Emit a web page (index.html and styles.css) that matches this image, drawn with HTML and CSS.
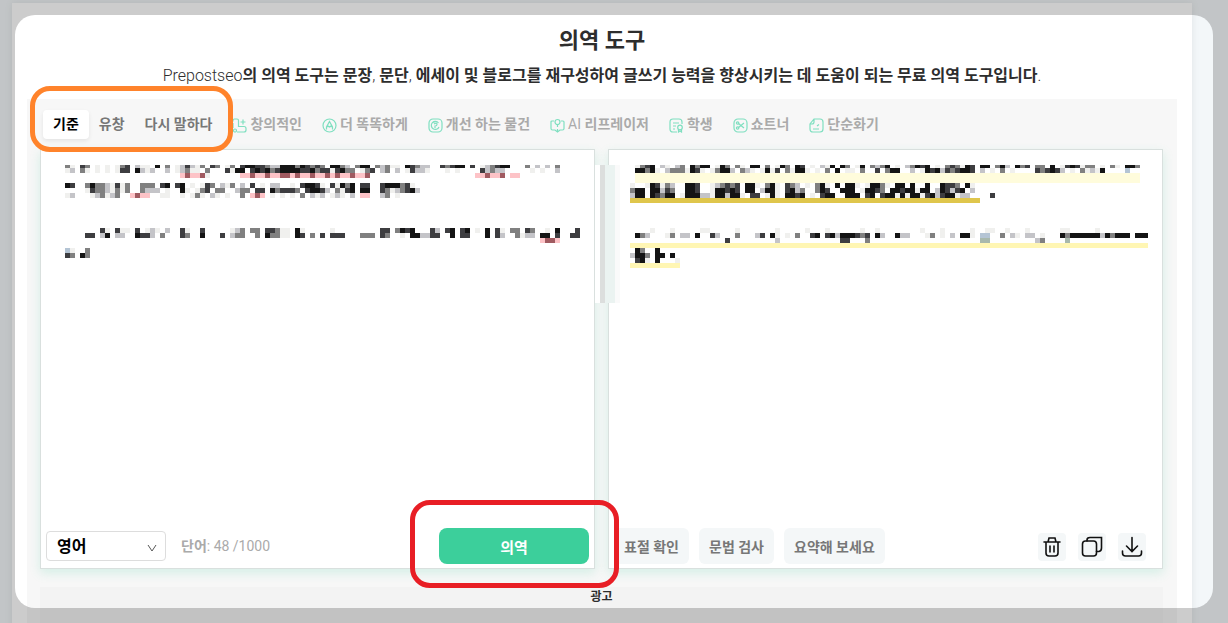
FILE: index.html
```html
<!DOCTYPE html>
<html lang="ko">

<head>
    <meta charset="UTF-8">
    <meta name="viewport" content="width=device-width, initial-scale=1.0">
    <title>의역 도구</title>
    <link rel="stylesheet" href="styles.css">
</head>

<body>
    <main class="page">
        <h1 class="title">의역 도구</h1>
        <p class="subtitle"><span class="light">Prepostseo</span>의 의역 도구는 문장<span class="light">,</span> 문단<span class="light">,</span> 에세이 및 블로그를 재구성하여 글쓰기 능력을 향상시키는 데 도움이 되는 무료 의역 도구입니다<span class="light">.</span></p>

        <section class="tool">
            <nav class="tabs">
                <button class="tab active">기준</button>
                <button class="tab">유창</button>
                <button class="tab">다시 말하다</button>
                <button class="tab premium">
                    <svg viewBox="0 0 15 15"><path d="M1 3.5V2.5Q1 1 2.5 1H5Q6.500 1 6.5 2.5V8.5H12Q14 8.5 14 10.5V12Q14 14 12 14H5M1 5V10M11 1.5V6.5M8.5 4H13.5M3 11A1.5 1.5 0 1 1 3 14A1.5 1.5 0 1 1 3 11"/></svg>
                    창의적인
                </button>
                <button class="tab premium">
                    <svg viewBox="0 0 15 15"><circle cx="7.5" cy="7.5" r="6.5"/><path d="M4.5 11.5V9L7.5 3.5L10.5 9V11.5M4.5 9Q6 7.5 7.5 9Q9 7.5 10.5 9"/></svg>
                    더 똑똑하게
                </button>
                <button class="tab premium">
                    <svg viewBox="0 0 15 15"><rect x="1" y="1" width="13" height="13" rx="4"/><path d="M10.5 5A4 4 0 1 0 11 9M6 6Q9 4 9 6.5Q9 8 7 8V10M4.5 4.5L7 4"/></svg>
                    개선 하는 물건
                </button>
                <button class="tab premium">
                    <svg viewBox="0 0 15 15"><path d="M4 3H2Q1 3 1 4V10.5Q1 12 2.5 12H5L7.5 14L10 12H12.5Q14 12 14 10.5V4Q14 3 13 3H11M7.5 7V9M7.5 11V14"/><circle cx="7.5" cy="4" r="2.5"/></svg>
                    <span><span class="regular">AI</span> 리프레이저</span>
                </button>
                <button class="tab premium">
                    <svg viewBox="0 0 15 15"><path d="M8 14H4Q1 14 1 11V4Q1 1 4 1H10Q13 1 13 4V6M4 5H10M4 8H7M4 11H6"/><circle cx="11" cy="9.5" r="2.3"/><path d="M9.5 11.5V14L11 13L12.5 14V11.5"/></svg>
                    학생
                </button>
                <button class="tab premium">
                    <svg viewBox="0 0 15 15"><rect x="1" y="1" width="13" height="13" rx="4"/><path d="M5.5 5.5L11 10M5.5 9.5L11 5"/><circle cx="4.6" cy="5" r="1.2"/><circle cx="4.6" cy="10" r="1.2"/></svg>
                    쇼트너
                </button>
                <button class="tab premium">
                    <svg viewBox="0 0 15 15"><path d="M5 1H11Q14 1 14 4V11Q14 14 11 14H4Q1 14 1 11V6ZM5 1V4Q5 6 3 6H1M4 11H10M8 8L10 6.5"/></svg>
                    단순화기
                </button>
                <div class="mark mark-orange"></div>
            </nav>

            <div class="editors">
                <div class="editor">
                    <canvas id="source" class="mosaic" width="525" height="110"></canvas>
                    <div class="editor-footer">
                        <select class="language" aria-label="언어">
                            <option>영어</option>
                        </select>
                        <span class="words">단어<span class="regular">: 48 /1000</span></span>
                        <div class="submit">
                            <button class="primary">의역</button>
                            <div class="mark mark-red"></div>
                        </div>
                    </div>
                </div>
                <div class="editor result">
                    <div class="scrollbar"></div>
                    <canvas id="result" class="mosaic" width="518" height="110"></canvas>
                    <div class="editor-footer">
                        <button class="check">표절 확인</button>
                        <button class="check">문법 검사</button>
                        <button class="check">요약해 보세요</button>
                        <div class="actions">
                            <button class="icon-btn" aria-label="삭제">
                                <svg viewBox="0 0 22 22"><path d="M3 6H19M7 6L8 2H14L15 6M5 6V17Q5 20 8 20H14Q17 20 17 17V6M9 10V16M13 10V16"/></svg>
                            </button>
                            <button class="icon-btn" aria-label="복사">
                                <svg viewBox="0 0 22 22"><rect x="1.5" y="5" width="14" height="15" rx="3"/><path d="M6 5V4Q6 1.5 9 1.5H20.5V12Q20.5 15 18 15.5H15.5"/></svg>
                            </button>
                            <button class="icon-btn" aria-label="다운로드">
                                <svg viewBox="0 0 22 22"><path d="M11 1.5V15M5.5 10L11 15.5L16.5 10M1.5 15V17Q1.5 20 4.5 20H17.5Q20.5 20 20.5 17V15"/></svg>
                            </button>
                        </div>
                    </div>
                </div>
            </div>
            <div class="ad">광고</div>
        </section>
    </main>
    <div class="spotlight"></div>
    <script src="script.js"></script>
</body>

</html>
```
FILE: styles.css
```css
* {
    box-sizing: border-box;
}

body {
    margin: 0;
    height: 100vh;
    overflow: hidden;
    padding: 3px 36px 0 12px;
    background-color: #f3f7f9;
    font-family: Roboto, "Noto Sans CJK KR", sans-serif;
    font-weight: 700;
    color: #2d2d2d;
}

button,
select {
    font: inherit;
    border: none;
    margin: 0;
    cursor: pointer;
}

.light {
    font-weight: 300;
}

.regular {
    font-weight: 400;
}

.page {
    min-height: 100vh;
    padding: 23px 15px 0;
    background-color: #fff;
    box-shadow: 0 0 8px rgba(0, 0, 0, 0.08);
}

.title {
    margin: 0;
    font-size: 22px;
    line-height: 30px;
    text-align: center;
}

.subtitle {
    margin: 8px 0 11px;
    font-size: 16px;
    line-height: 24px;
    text-align: center;
    white-space: nowrap;
}

.tool {
    padding: 0 14px 0 13px;
    background-color: #f7f7f7;
}

.tabs {
    position: relative;
    display: flex;
    align-items: center;
    height: 50px;
    padding-left: 3px;
}

.tab {
    display: flex;
    align-items: center;
    gap: 3px;
    height: 29px;
    padding: 0 10px;
    border-radius: 4px;
    background: none;
    color: #777;
    font-size: 14px;
    line-height: 20px;
    white-space: nowrap;
}

.tab.active {
    background-color: #fff;
    color: #000;
    box-shadow: 0 2px 4px rgba(0, 0, 0, 0.08);
}

.tab.premium {
    color: #aaa;
}

.tab svg {
    width: 15px;
    height: 15px;
    margin-top: 3px;
    fill: none;
    stroke: #7fdfc0;
    stroke-width: 1.2;
}

.mark {
    position: absolute;
    border: 5px solid;
    pointer-events: none;
}

.mark-orange {
    left: -10px;
    top: -13px;
    width: 203px;
    height: 66px;
    border-color: #ff832b;
    border-radius: 20px;
    z-index: 2;
}

.mark-red {
    inset: -28px -30px -24px -29px;
    border-color: #e81e25;
    border-radius: 20px;
    z-index: 2;
}

.editors {
    display: grid;
    grid-template-columns: 1fr 1fr;
    gap: 13px;
}

.editor {
    position: relative;
    display: flex;
    flex-direction: column;
    justify-content: space-between;
    height: 420px;
    border: 1px solid #d9e0de;
    background-color: #fff;
    box-shadow: 0 4px 10px rgba(60, 205, 155, 0.18);
}

.mosaic {
    align-self: flex-start;
    margin: 15px 0 0 24px;
}

.result .mosaic {
    margin-left: 21px;
}

/* blurred scroll track between both editors */
.scrollbar {
    position: absolute;
    left: -14px;
    top: 15px;
    width: 25px;
    height: 138px;
    background: linear-gradient(90deg, #fff 5px, #dcdedd 5px, #dcdedd 10px, #ebf3f1 10px, #ebf3f1 20px, #fafafa 20px);
}

.editor-footer {
    display: flex;
    align-items: center;
    height: 44px;
    padding: 0 5px;
}

.language {
    width: 120px;
    height: 30px;
    padding: 0 10px;
    appearance: none;
    border: 1px solid #ddd;
    border-radius: 4px;
    color: #000;
    font-size: 16px;
    background: #fff url("data:image/svg+xml,%3Csvg xmlns='http://www.w3.org/2000/svg' width='10' height='8' fill='none' stroke='%23555'%3E%3Cpath d='M1 1l4 6 4-6'/%3E%3C/svg%3E") no-repeat right 8px bottom 8px;
}

.words {
    margin-left: 15px;
    color: #aaa;
    font-size: 14px;
    line-height: 20px;
}

.submit {
    position: relative;
    margin-left: auto;
}

.primary {
    display: block;
    width: 150px;
    height: 36px;
    border-radius: 8px;
    background-color: #3ccf9b;
    color: #fff;
    font-size: 15px;
}

.check {
    height: 36px;
    padding: 0 10px;
    margin-right: 10px;
    border-radius: 6px;
    background-color: #f4f7f8;
    color: #777;
    font-size: 14px;
    white-space: nowrap;
}

.actions {
    display: flex;
    gap: 12px;
    margin-left: auto;
    padding: 2px 11px 0 0;
}

.icon-btn {
    width: 28px;
    height: 28px;
    padding: 3px;
    border-radius: 4px;
    background-color: #f4f7f8;
}

.icon-btn svg {
    display: block;
    width: 22px;
    height: 22px;
    fill: none;
    stroke: #111;
    stroke-width: 1.6;
    stroke-linecap: round;
}

.ad {
    margin-top: 18px;
    height: 60px;
    background-color: #f3f3f3;
    font-size: 12px;
    line-height: 20px;
    text-align: center;
}

/* dims everything around the rounded window */
.spotlight {
    position: fixed;
    inset: 15px;
    border-radius: 20px;
    box-shadow: 0 0 0 60px rgba(0, 0, 0, 0.2);
    pointer-events: none;
    z-index: 3;
}
```
FILE: script.js
```js
const colors = {
    k: "#141414",
    d: "#3d3d40",
    g: "#808080",
    l: "#c4c4c8",
    w: "#f0f0ee",
    b: "#b4c4d4",
    p: "#fdc3c7",
    r: "#a05a60",
    c: "#a8b8ac"
};

// [y, height, cells], each cell is 5px wide
const sourceRows = [
    [0, 3, "gw.dg.w.w.wgd.lww.k.g.wldlwg.dg.wg.dkkddgllkkkgkdgdg.kkgl.gkk.glgww.kdgll..dgdkk.d.wlgdkk...g.l.l.g"],
    [3, 5, "wl.gw.w.w.wdd.klwl..l.wlgww.g...dwkk.dkdkgdkkkkddkgddwdkgg.wgd.lg.l.wdllw...w.w....dlgll.....w.w..l"],
    [8, 5, ".......................prpprw......pprpprpprrprpprpprprpprppr.....................pprppr.pp"],
    [18, 5, "kd..gkgglwdwg..ggg.dk.dk.w.wdg.lwg.l.d.w.ll..w.dkkdw.dwkgk.dd..dkkkgdw"],
    [23, 5, "....wdgglwgwg..glll.w..kw.wgd.gg..lgg.dd.kgdddg.dkkdl.gwdk.kk..dgwlgdkl"],
    [28, 5, "wl...wlgwlg..prpp..ww..w.wgw.lw.w..g.prp.w.w.w.g.lwl.wlw.l.pp..lg.w"],
    [63, 5, ".......dw.dww.d.wlw.l..dw..d.....wlg.gg.ddgww.kw.....w.........dd.gkdk...dl.dk.dk.w.k.dw.gg.dg..w.k...d"],
    [68, 5, "....dd.lk.ll..kddl.g...dg..k...d.lgg..g.kggww.kd.g.d.ddd...ggg.dg..w.kklldd..k.dd...k.dl..gwll.kk.d..dd"],
    [73, 5, "...............................................................................................prrp"],
    [83, 5, "bw..g"],
    [88, 5, "dg.kg"]
];

const resultRows = [
    [0, 3, ".wgdk.lw.lg.kgkk.wkg.gw.kk.g.wkg.kd.w.lwk.kg.wk.glgk.w.lgkdk.w.gdgwkd.kk.gkl.kgd.gg.k.wdkdwgg.w.gw.kkg"],
    [3, 5, ".kkgkw.lgggwkdw.wgkkl.glw.wkwd.gwkkw.w.g.k.ww.g..d.gkk..l.wkdkldgdkkd.l.w.g.w....dgdkdl.w.gwlwk....b"],
    [18, 5, "w..wkdwgl..kkd..wlgdgd.kkw.gkw.dgl.w.gkw.k.kkw.wkkgw.kk.k..k..kddg.kw"],
    [23, 5, "gkk.kkldg..kkd..wkkdkd.kk.lkkw.dklg..gkd..kkk.wkkdg.kkdkkwkk.lkdldk.l"],
    [28, 5, "lkk.kdgkk.wkkkllwkklkkw.dd.wkw.kkdk.w.dkk..kkk.dk.dkkwkwkkwdkldkkwll....d"],
    [63, 5, "....w...w.....ww.....w.......w.....w...w......w..w........w...w.....w..ww..w...w......ww.....w"],
    [68, 5, ".kgl...wg.ll.k..dl...g...ld.kw.w.g..dk.dklkkkdgd.kl..kll...wg.w.l.kkw.bb..g.lw.ll.w...kgkkkkkklkgkkk.kkk"],
    [73, 5, "...................d.........l............dd...g......................cc.........lg....c"],
    [83, 5, ".kg..k"],
    [88, 5, "lkkg.kk.k"],
    [93, 5, ".dkw.k...w"]
];

function drawMosaic(id, rows, lines) {
    const ctx = document.getElementById(id).getContext("2d");
    lines.forEach(([x, y, width, height, color]) => {
        ctx.fillStyle = color;
        ctx.fillRect(x, y, width, height);
    });
    rows.forEach(([y, height, cells]) => {
        [...cells].forEach((cell, i) => {
            if (colors[cell]) {
                ctx.fillStyle = colors[cell];
                ctx.fillRect(i * 5, y, 5, height);
            }
        });
    });
}

drawMosaic("source", sourceRows, []);
drawMosaic("result", resultRows, [
    [5, 8, 505, 10, "#fffcdc"],
    [0, 33, 350, 5, "#dfc64c"],
    [0, 78, 518, 5, "#fff6b4"],
    [0, 98, 50, 5, "#fff6b4"]
]);
```
